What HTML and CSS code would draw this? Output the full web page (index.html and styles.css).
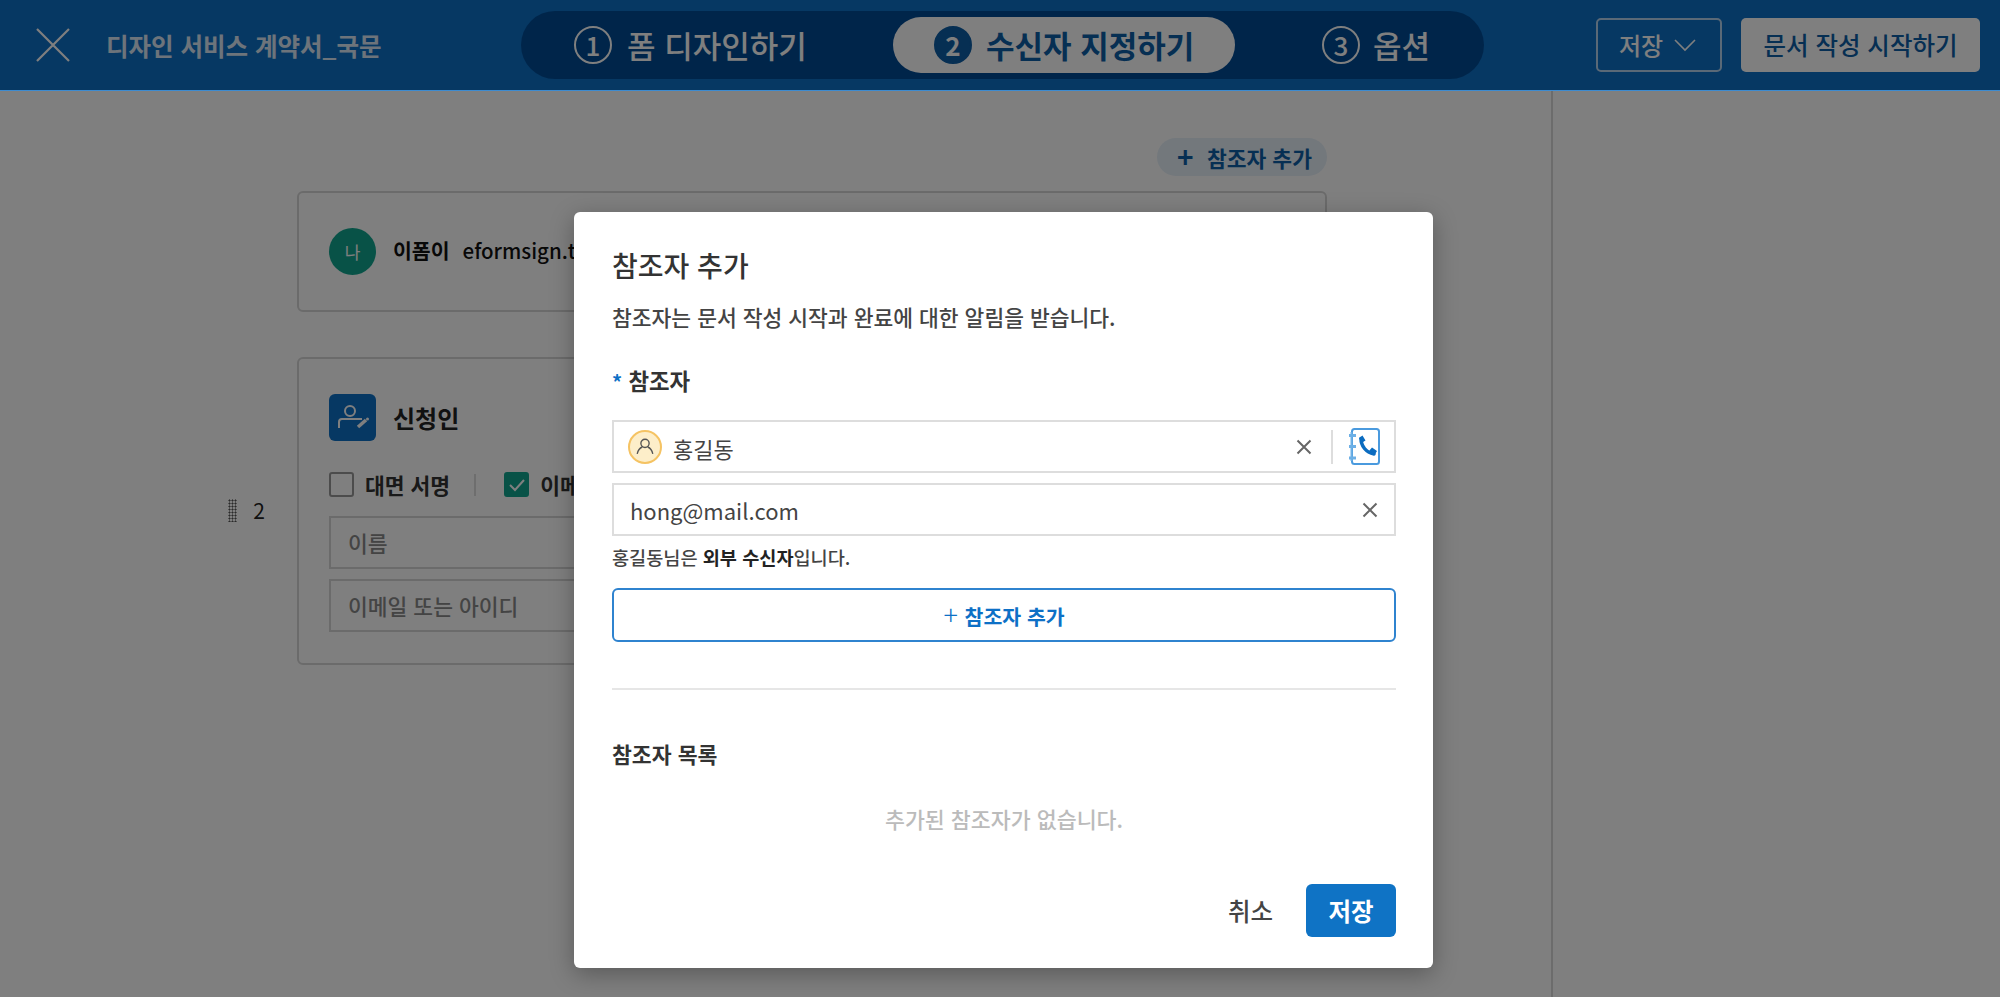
FILE: index.html
```html
<!DOCTYPE html>
<html lang="ko">
<head>
<meta charset="utf-8">
<title>참조자 추가</title>
<link rel="stylesheet" href="styles.css">
</head>
<body>
<div class="app">
  <header class="topbar">
    <div class="doc">
      <button class="close-btn" aria-label="닫기">
        <svg width="36" height="36" viewBox="0 0 36 36"><path d="M2 2L34 34M34 2L2 34" fill="none" stroke="#fff" stroke-width="2.2"/></svg>
      </button>
      <span class="doc-title">디자인 서비스 계약서_국문</span>
    </div>
    <nav class="steps">
      <div class="step step-one"><span class="step-num">1</span><span>폼 디자인하기</span></div>
      <div class="step step-two active"><span class="step-num">2</span><span>수신자 지정하기</span></div>
      <div class="step step-three"><span class="step-num">3</span><span>옵션</span></div>
    </nav>
    <div class="actions">
      <button class="btn-save">저장
        <svg width="24" height="14" viewBox="0 0 24 14"><path d="M2 2L12 12L22 2" fill="none" stroke="#fff" stroke-width="1.600"/></svg>
      </button>
      <button class="btn-start">문서 작성 시작하기</button>
    </div>
  </header>
  <div class="workspace">
    <main class="canvas">
      <div class="add-row">
        <button class="add-pill"><span class="pill-plus">+</span>참조자 추가</button>
      </div>
      <section class="card card-me">
        <span class="avatar-me">나</span>
        <span class="me-name">이폼이</span>
        <span class="me-mail">eformsign.test</span>
      </section>
      <div class="card-row">
        <div class="order">
          <span class="grip"></span>
          <span>2</span>
        </div>
        <section class="card card-recipient">
          <div class="rec-head">
            <span class="rec-icon">
              <svg width="47" height="47" viewBox="0 0 47 47" fill="none" stroke="#fff" stroke-width="2"><circle cx="21" cy="17" r="5"/><path d="M10 34V28q0-3 3-3H33"/><path d="M29 33L37 26" stroke-width="3.500"/><circle cx="38.500" cy="25" r="1.500" fill="#fff" stroke="none"/></svg>
            </span>
            <span class="rec-name">신청인</span>
          </div>
          <div class="rec-options">
            <span class="check"></span><span class="opt">대면 서명</span>
            <span class="opt-sep"></span>
            <span class="check on"><svg width="18" height="14" viewBox="0 0 18 14"><path d="M2 7l5 5 9-10" fill="none" stroke="#fff" stroke-width="2"/></svg></span><span class="opt">이메일</span>
          </div>
          <div class="rec-field">이름</div>
          <div class="rec-field">이메일 또는 아이디</div>
        </section>
      </div>
    </main>
    <aside class="side"></aside>
  </div>
  <div class="overlay"></div>
  <section class="modal">
    <h2 class="modal-title">참조자 추가</h2>
    <p class="modal-desc">참조자는 문서 작성 시작과 완료에 대한 알림을 받습니다.</p>
    <div class="label"><span class="req">*</span> 참조자</div>
    <div class="field">
      <span class="person">
        <svg width="24" height="24" viewBox="0 0 24 24" fill="none" stroke="#555" stroke-width="1.500"><circle cx="12" cy="8" r="4.500"/><path d="M3.500 19.500C4.500 15 6.500 13 9 12M20.500 19.500C19.500 15 17.500 13 15 12"/></svg>
      </span>
      <span class="field-text name">홍길동</span>
      <svg class="clear" width="16" height="16" viewBox="0 0 16 16"><path d="M1.500 1.500L14.500 14.500M14.500 1.500L1.500 14.500" stroke="#666" stroke-width="2"/></svg>
      <span class="field-sep"></span>
      <svg class="book" width="32" height="37" viewBox="0 0 32 37" fill="none">
        <rect x="4" y="1" width="27" height="35" rx="2.500" stroke="#4a9ade" stroke-width="2"/>
        <path d="M1 7.500h7M1 18.500h7M1 30h7" stroke="#6db0e6" stroke-width="3"/>
        <path d="M3.500 4v29" stroke="#6db0e6" stroke-width="2"/>
        <path d="M13 10.500C13 18 18 24.500 26 26" stroke="#0b6cc0" stroke-width="3.500" stroke-linecap="round"/>
        <path d="M11 10l3.500-2.500 3 5-4 2.500zM21 23l3-3.500 5 3.500-2.500 4z" fill="#0b6cc0"/>
      </svg>
    </div>
    <div class="field field-mail">
      <span class="field-text mail">hong@mail.com</span>
      <svg class="clear" width="16" height="16" viewBox="0 0 16 16"><path d="M1.500 1.500L14.500 14.500M14.500 1.500L1.500 14.500" stroke="#666" stroke-width="2"/></svg>
    </div>
    <p class="hint">홍길동님은 <b>외부 수신자</b>입니다.</p>
    <button class="btn-add"><span class="plus">+</span> <span class="add-text">참조자 추가</span></button>
    <hr class="divider">
    <div class="list-title">참조자 목록</div>
    <p class="empty">추가된 참조자가 없습니다.</p>
    <footer class="modal-foot">
      <button class="btn-cancel">취소</button>
      <button class="btn-ok">저장</button>
    </footer>
  </section>
</div>
</body>
</html>
```
FILE: styles.css
```css
* { box-sizing: border-box; }
html, body { margin: 0; height: 100%; }
body {
  font-family: "Noto Sans CJK KR", "Noto Sans", sans-serif;
  background: #fff;
  color: #222;
  overflow: hidden;
}
button { font-family: inherit; cursor: pointer; }
.app { position: relative; height: 997px; display: flex; flex-direction: column; }

.topbar {
  position: relative;
  height: 91px;
  flex: none;
  display: flex;
  align-items: center;
  background: #0d70c6;
  border-bottom: 1px solid #3d8bd0;
  color: #fff;
}
.topbar::after { content: ""; position: absolute; inset: 0; background: rgba(0,0,0,.5); pointer-events: none; }
.doc { width: 521px; display: flex; align-items: center; padding-left: 35px; flex: none; }
.close-btn { width: 36px; height: 36px; padding: 0; border: 0; background: none; display: flex; }
.doc-title { margin-left: 35px; font-size: 24.500px; font-weight: 700; opacity: .85; }

.steps {
  width: 963px;
  height: 68px;
  flex: none;
  margin-top: -1px;
  padding: 0 6px;
  display: flex;
  align-items: center;
  background: #004b95;
  border-radius: 34px;
}
.step { display: flex; align-items: center; height: 56px; font-size: 31px; font-weight: 500; border-radius: 28px; }
.step-one { width: 366px; padding-left: 47px; }
.step-two { width: 342px; padding-left: 41px; }
.step-three { padding-left: 87px; }
.step-num {
  width: 38px; height: 38px; margin-right: 15px;
  border: 2.500px solid #fff; border-radius: 50%;
  display: flex; align-items: center; justify-content: center;
  font-size: 26px; font-weight: 500; line-height: 1;
}
.step-three .step-num { margin-right: 13px; }
.active { background: #fff; color: #0d5ea6; font-weight: 700; }
.active .step-num { margin-right: 14px; background: #0d5ea6; border-color: #0d5ea6; color: #fff; font-weight: 700; }

.actions { flex: 1; display: flex; align-items: center; gap: 19px; padding-left: 112px; margin-top: -1px; }
.btn-save {
  width: 126px; height: 54px; border: 2px solid #b5d3ee; border-radius: 5px; background: none;
  color: #fff; font-size: 24px; font-weight: 500;
  display: flex; align-items: center; justify-content: center; gap: 10px; padding: 0 2px 0 0;
}
.btn-start {
  width: 239px; height: 54px; border: 0; border-radius: 5px; background: #fff;
  color: #0d5ea6; font-size: 24.500px; font-weight: 500; padding: 0;
}

.workspace { flex: 1; display: flex; }
.canvas { width: 1551px; flex: none; padding: 47px 0 0 228px; }
.side { flex: 1; border-left: 2px solid #d8d8d8; }
.add-row { width: 1099px; display: flex; justify-content: flex-end; margin-bottom: 15px; }
.add-pill {
  width: 170px; height: 38px; padding: 0 0 0 20px; border: 0; border-radius: 19px;
  background: #e6f0f9; color: #0d5ea6; font-size: 21.500px; font-weight: 700;
  display: flex; align-items: center;
}
.pill-plus { font-size: 28px; font-weight: 700; line-height: 1; width: 30px; text-align: left; margin-top: -3px; }
.card { width: 1030px; border: 2px solid #d6d6d6; border-radius: 6px; background: #fff; }
.card-me { margin-left: 69px; height: 121px; padding: 35px 0 0 30px; display: flex; align-items: flex-start; font-size: 20.500px; font-weight: 500; color: #111; white-space: nowrap; overflow: hidden; }
.avatar-me {
  width: 47px; height: 47px; border-radius: 50%; background: #11a58f; color: #fff;
  display: flex; align-items: center; justify-content: center; font-size: 17px; font-weight: 400;
  flex: none;
}
.me-name { margin-left: 17px; line-height: 44px; font-weight: 700; }
.me-mail { margin-left: 13px; line-height: 44px; }
.card-row { display: flex; margin-top: 45px; }
.order {
  width: 69px; flex: none; padding: 139px 32px 0 0;
  display: flex; justify-content: flex-end; align-items: flex-start; gap: 16px;
  font-size: 21px; line-height: 28px; color: #222;
}
.grip { width: 9px; height: 23px; margin-top: 3px; flex: none; background: radial-gradient(circle, #555 45%, transparent 50%) 0 0 / 3px 3px; }
.card-recipient { height: 308px; padding: 35px 0 0 30px; }
.rec-head { display: flex; align-items: center; gap: 17px; }
.rec-icon { width: 47px; height: 47px; border-radius: 6px; background: #0d70c6; display: flex; }
.rec-name { font-size: 24px; font-weight: 700; color: #222; }
.rec-options { margin-top: 31px; display: flex; align-items: center; font-size: 21.500px; font-weight: 700; color: #333; height: 25px; }
.check { width: 25px; height: 25px; border: 2px solid #999; border-radius: 3px; display: flex; align-items: center; justify-content: center; flex: none; }
.check.on { background: #11a58f; border-color: #11a58f; }
.opt { margin-left: 11px; }
.opt-sep { width: 2px; height: 22px; background: #ddd; margin: 0 28px 0 24px; }
.rec-field {
  width: 960px; height: 53px; margin-top: 10px; padding-left: 17px; border: 2px solid #d6d6d6;
  display: flex; align-items: center; color: #888; font-size: 21.500px; font-weight: 500;
}
.rec-options + .rec-field { margin-top: 19px; }

.overlay { position: absolute; inset: 91px 0 0 0; background: rgba(0,0,0,.5); }

.modal {
  position: absolute; left: 574px; top: 212px; width: 859px; height: 756px;
  padding: 31px 38px 0;
  background: #fff; border-radius: 6px;
  box-shadow: 0 6px 24px rgba(0,0,0,.3);
  color: #333;
}
.modal-title { margin: 0; font-size: 28px; line-height: 44px; font-weight: 500; color: #333; }
.modal-desc { margin: 15px 0 0; font-size: 21.500px; line-height: 30px; font-weight: 500; color: #444; }
.label { margin-top: 33px; font-size: 22.400px; line-height: 30px; font-weight: 700; color: #333; }
.req { color: #0d70c6; font-size: 20px; font-weight: 700; }
.field {
  width: 784px; height: 53px; margin-top: 23px; padding: 0 12px 0 14px; border: 2px solid #ddd;
  display: flex; align-items: center; font-size: 22px;
}
.field-mail { margin-top: 10px; padding: 0 16px 0 16px; justify-content: space-between; }
.person {
  width: 34px; height: 34px; border-radius: 50%; background: #fdeec9; border: 2px solid #f5c363;
  display: flex; align-items: center; justify-content: center; flex: none;
}
.person svg { width: 22px; height: 22px; }
.field-text { margin-left: 11px; color: #444; flex: 1; }
.field-text.name { padding-top: 2px; }
.field-text.mail { margin-left: 0; font-size: 22px; }
.field-sep { width: 2px; height: 34px; margin: 0 15px 0 19px; background: #ddd; }
.book { margin-right: 2px; }
.hint { margin: 8px 0 0; font-size: 18.600px; line-height: 26px; font-weight: 500; color: #444; }
.hint b { font-weight: 700; color: #222; }
.btn-add {
  display: block; width: 784px; height: 54px; margin-top: 18px; padding: 0;
  border: 2px solid #2f83cf; border-radius: 6px; background: #fff;
  color: #0d70c6; font-size: 20.500px; font-weight: 700;
}
.btn-add .plus { font-weight: 300; font-size: 27px; line-height: 1; }
.add-text { margin-left: 1px; }
.divider { width: 784px; margin: 46px 0 0; border: 0; border-top: 2px solid #e6e6e6; }
.list-title { margin-top: 49px; font-size: 21.600px; line-height: 30px; font-weight: 700; color: #333; }
.empty { margin: 35px 0 0; text-align: center; font-size: 21.700px; line-height: 30px; color: #bbb; font-weight: 500; width: 784px; }
.modal-foot { position: absolute; right: 37px; bottom: 31px; display: flex; align-items: center; gap: 33px; }
.btn-cancel { border: 0; background: none; padding: 0; font-size: 24.500px; font-weight: 500; color: #444; }
.btn-ok { width: 90px; height: 53px; border: 0; border-radius: 6px; background: #0f73c5; color: #fff; font-size: 24.500px; font-weight: 700; padding: 0; }
```
